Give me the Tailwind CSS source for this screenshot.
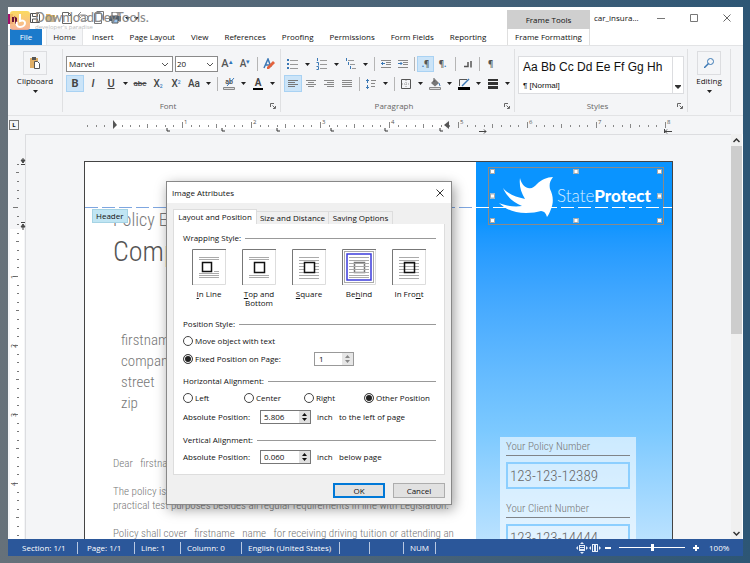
<!DOCTYPE html>
<html lang="en">
<head>
  <meta charset="UTF-8">
  <title>car_insurance - Image Attributes</title>
  <script src="https://cdn.jsdelivr.net/npm/@tailwindcss/browser@4"></script>
</head>
<body class="h-screen overflow-hidden bg-linear-to-r from-[#66717a] to-[#2d5675] py-[7px] pl-2 pr-[7px] font-['Open_Sans','Noto_Sans',sans-serif] text-[8px] font-medium leading-3 text-[#111]">

  <!-- shared symbols -->
  <svg class="hidden">
    <symbol id="caret" viewBox="0 0 5 3"><path d="M0 0h5L2.500 3z" fill="#222"/></symbol>
    <symbol id="chevron" viewBox="0 0 8 5"><path d="M1 1l3 3 3-3" fill="none" stroke="#555"/></symbol>
    <symbol id="launcher" viewBox="0 0 6 6"><path d="M.5 4V.5H4M2.500 2.500L5 5M5.500 3v2.500H3" fill="none" stroke="#666"/></symbol>
  </svg>

  <div class="flex h-full flex-col bg-[#f4f5f7]">

    <!-- title bar and tabs -->
    <header class="flex h-[38px] shrink-0 bg-white">
      <div class="relative flex min-w-0 flex-1 flex-col justify-between">
        <div class="flex h-[22px] items-center gap-1 pl-[21px]">
          <button aria-label="Save"><svg class="h-3 w-3" viewBox="0 0 12 12" fill="none" stroke="#555"><path d="M1.500 1.500h8l1 1v8h-9zM3.500 1.500v3h5v-3M3.500 10v-3h5v3"/></svg></button>
          <button aria-label="Open"><svg class="h-3 w-3" viewBox="0 0 12 12"><path d="M1 2h4l1 1h4v7H1z" fill="#e0b25c"/><path d="M3 5h9l-2 5H1z" fill="#c9b48c"/></svg></button>
          <button aria-label="New"><svg class="h-4 w-3" viewBox="0 0 12 16" fill="none" stroke="#666"><path d="M1.500 2.500h6l3 3v8h-9zM7.500 2.500v3h3"/></svg></button>
          <button aria-label="Undo"><svg class="h-3 w-3" viewBox="0 0 12 12" fill="none" stroke="#888"><path d="M1 3h7a3 3 0 010 6H5M4 0L1 3l3 3"/></svg></button>
          <button aria-label="Paste"><svg class="h-4 w-3" viewBox="0 0 12 16" fill="none" stroke="#777"><path d="M1.500 3.500h7v10h-7zM3.500 1.500h7v9"/></svg></button>
          <button aria-label="Print"><svg class="h-3 w-3" viewBox="0 0 12 12"><path d="M3 0h6v4H3z" fill="#fff" stroke="#555"/><path d="M0 4h12v5H0z" fill="#50606e"/><path d="M3 7h6v4H3z" fill="#9cc8ee" stroke="#555"/></svg></button>
          <button aria-label="More"><svg class="h-[3px] w-[5px]"><use href="#caret"/></svg></button>
          <button aria-label="Customize"><svg class="h-[3px] w-[5px]"><use href="#caret"/></svg></button>
        </div>
        <!-- watermark over the quick access icons -->
        <svg class="absolute left-0 top-1 h-5 w-6" viewBox="0 0 24 20">
          <defs><linearGradient id="wm" x2="0" y2="1"><stop stop-color="#fbd64e"/><stop offset="1" stop-color="#f5a98e"/></linearGradient></defs>
          <path d="M0 3h5v10H0z" fill="#a3116c"/>
          <rect x="2" y="0" width="20" height="19" rx="3" fill="url(#wm)" opacity=".9"/>
          <path d="M6 5l3 2v6H7V8M4 6h2v5H4z" fill="#6b1235"/>
          <path d="M12 3v7c3-1 5 0 5 2s-2 4-5 4-4-3-3-5" fill="none" stroke="#fff" stroke-width="2"/>
        </svg>
        <div class="pointer-events-none absolute left-[27px] top-1 whitespace-nowrap">
          <div class="font-['Lato',sans-serif] text-[13px] leading-3 text-[#8b8b8b]">DownloadDevTools.</div>
          <div class="text-[6px] leading-2 text-[#bbb]">developer's paradise</div>
        </div>
        <nav class="flex h-4 items-stretch">
          <button class="ml-0.5 w-8 bg-[#1b7acb] text-white">File</button>
          <button class="ml-1 w-[37px] border-x border-[#e3e4e6] bg-[#f4f5f7]">Home</button>
          <button class="ml-px px-2">Insert</button>
          <button class="px-2">Page Layout</button>
          <button class="px-2">View</button>
          <button class="px-2">References</button>
          <button class="px-2">Proofing</button>
          <button class="px-2">Permissions</button>
          <button class="px-2">Form Fields</button>
          <button class="px-2">Reporting</button>
        </nav>
      </div>
      <div class="flex w-[83px] flex-col pt-[3px]">
        <div class="flex h-[19px] items-center justify-center bg-[#cfcfcf]">Frame Tools</div>
        <button class="flex-1 border-x border-[#dfdfdf]">Frame Formatting</button>
      </div>
      <div class="flex h-[22px] w-[153px] items-center pl-1">
        <span class="flex-1">car_insura...</span>
        <button aria-label="Minimize" class="flex w-[33px] justify-center"><svg class="h-2 w-2" viewBox="0 0 8 8" stroke="#777"><path d="M0 4.500h8"/></svg></button>
        <button aria-label="Maximize" class="flex w-[33px] justify-center"><svg class="h-2 w-2" viewBox="0 0 8 8" fill="none" stroke="#777"><path d="M.5.5h7v7h-7z"/></svg></button>
        <button aria-label="Close" class="flex w-[33px] justify-center"><svg class="h-2 w-2" viewBox="0 0 8 8" stroke="#666"><path d="M.5.5l7 7M7.500.5l-7 7"/></svg></button>
      </div>
    </header>

    <!-- ribbon -->
    <section class="flex h-[71px] shrink-0 border-y border-[#e2e3e5] bg-[#f4f5f7] py-[3px]">
      <button class="flex w-[55px] flex-col items-center border-r border-[#dfe0e2] pt-0.5">
        <span class="flex h-6 w-6 items-center justify-center border border-[#dcdde0]">
          <svg class="h-3 w-3" viewBox="0 0 12 12"><path d="M1 1h8v10H1z" fill="#dfae66"/><path d="M3 0h4v3H3z" fill="#555"/><path d="M5.500 4.500h3l2 2v5h-5z" fill="#fff" stroke="#555"/></svg>
        </span>
        <span>Clipboard</span>
        <svg class="mt-[3px] h-[3px] w-[5px]"><use href="#caret"/></svg>
      </button>

      <div class="flex w-[218px] flex-col border-r border-[#dfe0e2] pl-[3px] pt-[7px]">
        <div class="flex h-4 items-center">
          <div class="relative h-4 w-[107px]">
            <select aria-label="Font name" class="h-4 w-full appearance-none border border-[#8a8a8a] bg-white pl-0.5"><option>Marvel</option></select>
            <svg class="pointer-events-none absolute right-1 top-[6px] h-[5px] w-2"><use href="#chevron"/></svg>
          </div>
          <div class="relative ml-0.5 h-4 w-[43px]">
            <select aria-label="Font size" class="h-4 w-full appearance-none border border-[#8a8a8a] bg-white pl-px"><option>20</option></select>
            <svg class="pointer-events-none absolute right-1 top-[6px] h-[5px] w-2"><use href="#chevron"/></svg>
          </div>
          <button class="w-[18px] font-['Roboto',sans-serif] text-[11px] text-[#555]">A<sup class="text-[7px] text-[#2f74b8]">▴</sup></button>
          <button class="w-[18px] font-['Roboto',sans-serif] text-[10px] text-[#555]">A<sup class="text-[7px] text-[#2f74b8]">▾</sup></button>
          <span class="flex w-[6px] justify-center"><i class="h-3.5 w-px bg-[#b5b5b5]"></i></span>
          <button aria-label="Clear formatting" class="flex w-[18px] justify-center"><svg class="h-3 w-3" viewBox="0 0 12 12"><path d="M1 10l4-9 3 8M2.500 7h4" fill="none" stroke="#3b78b5" stroke-width="1.500"/><path d="M4 9l6-6 2 2-6 6H4z" fill="#e2623d"/></svg></button>
        </div>
        <div class="mt-[3px] flex h-[17px] items-stretch font-['Roboto',sans-serif] text-[9px] text-[#444]">
          <button class="w-[18px] border border-[#a9d2f3] bg-[#cbe4f8] text-[11px] font-bold">B</button>
          <button class="w-[18px] text-[11px] italic">I</button>
          <button class="w-[18px] text-[11px] underline">U</button>
          <button aria-label="Underline styles" class="flex w-[11px] items-center justify-center"><svg class="h-[3px] w-[5px]"><use href="#caret"/></svg></button>
          <button class="w-[18px] text-[8px] line-through">abc</button>
          <button class="w-[18px] text-[10px]">X<sub class="text-[5px] text-[#2f74b8]">2</sub></button>
          <button class="w-[18px] text-[10px]">X<sup class="text-[5px] text-[#2f74b8]">2</sup></button>
          <button class="w-[18px] text-[10px]">Aa</button>
          <button aria-label="Change case" class="flex w-[11px] items-center justify-center"><svg class="h-[3px] w-[5px]"><use href="#caret"/></svg></button>
          <span class="flex w-[6px] items-center justify-center"><i class="h-3.5 w-px bg-[#b5b5b5]"></i></span>
          <button aria-label="Highlight" class="flex w-[18px] flex-col items-center justify-center text-[7px] leading-2">
            <span>ab</span><svg class="-mt-2 h-3 w-3" viewBox="0 0 12 12"><path d="M11 0L4 8" stroke="#3b78b5"/><path d="M.5 9.500h11v2H.5z" fill="#ddd" stroke="#888"/></svg>
          </button>
          <button aria-label="Highlight colors" class="flex w-[11px] items-center justify-center"><svg class="h-[3px] w-[5px]"><use href="#caret"/></svg></button>
          <button class="flex w-[18px] items-center justify-center"><span class="border-b-2 border-black px-0.5 text-[10px] font-bold leading-[10px]">A</span></button>
          <button aria-label="Font colors" class="flex w-[11px] items-center justify-center"><svg class="h-[3px] w-[5px]"><use href="#caret"/></svg></button>
        </div>
        <div class="mt-auto flex items-center text-[#666]">
          <span class="flex-1 text-center">Font</span>
          <button aria-label="Font dialog" class="mr-1"><svg class="h-[6px] w-[6px]"><use href="#launcher"/></svg></button>
        </div>
      </div>

      <div class="flex w-[234px] flex-col border-r border-[#dfe0e2] pl-[3px] pt-[7px]">
        <div class="flex h-4 items-stretch text-[#555]">
          <button aria-label="Bullets" class="flex w-[17px] items-center justify-center"><svg class="h-3 w-3" viewBox="0 0 12 12"><path d="M0 1h2v2H0zM0 5h2v2H0zM0 9h2v2H0z" fill="#3b78b5"/><path d="M3 2.500h8M3 6.500h8M3 10.500h8" stroke="#999"/></svg></button>
          <button aria-label="Bullet styles" class="flex w-3 items-center justify-center"><svg class="h-[3px] w-[5px]"><use href="#caret"/></svg></button>
          <button aria-label="Numbering" class="flex w-[17px] items-center justify-center"><svg class="h-3 w-3" viewBox="0 0 12 12"><path d="M1.500 0v3M.5 4.500h2v3M.5 8.500h2v3h-2" stroke="#3b78b5" fill="none"/><path d="M4 2.500h7M4 6.500h7M4 10.500h7" stroke="#999"/></svg></button>
          <button aria-label="Numbering styles" class="flex w-3 items-center justify-center"><svg class="h-[3px] w-[5px]"><use href="#caret"/></svg></button>
          <button aria-label="Multilevel list" class="flex w-[17px] items-center justify-center"><svg class="h-3 w-3" viewBox="0 0 12 12"><path d="M1.500 0v3M3.500 4v3M5.500 8v3" stroke="#3b78b5"/><path d="M3 2.500h6M5 6.500h5M7 10.500h4" stroke="#999"/></svg></button>
          <button aria-label="Multilevel styles" class="flex w-3 items-center justify-center"><svg class="h-[3px] w-[5px]"><use href="#caret"/></svg></button>
          <span class="flex w-[6px] items-center justify-center"><i class="h-3.5 w-px bg-[#b5b5b5]"></i></span>
          <button aria-label="Decrease indent" class="flex w-[17px] items-center justify-center"><svg class="h-2.5 w-2.5" viewBox="0 0 10 10"><path d="M0 1.500h10M5 3.500h5M5 5.500h5M0 8.500h10" stroke="#888"/><path d="M0 4.500h4M2 3L.5 4.500 2 6" fill="none" stroke="#3b78b5"/></svg></button>
          <button aria-label="Increase indent" class="flex w-[17px] items-center justify-center"><svg class="h-2.5 w-2.5" viewBox="0 0 10 10"><path d="M0 1.500h10M5 3.500h5M5 5.500h5M0 8.500h10" stroke="#888"/><path d="M0 4.500h4M2.500 3L4 4.500 2.500 6" fill="none" stroke="#3b78b5"/></svg></button>
          <span class="flex w-[6px] items-center justify-center"><i class="h-3.5 w-px bg-[#b5b5b5]"></i></span>
          <button class="w-[17px] border border-[#a9d2f3] bg-[#cbe4f8] font-bold"><span class="text-[#2f74b8]">.</span>¶</button>
          <button class="w-[17px] font-bold">¶<span class="text-[#2f74b8]">.</span></button>
          <span class="flex w-[8px] items-center justify-center"><i class="h-3.5 w-px bg-[#b5b5b5]"></i></span>
          <button aria-label="Line break marks" class="flex w-[17px] items-center justify-center"><svg class="h-2 w-2" viewBox="0 0 8 8" fill="none" stroke="#555" stroke-width="1.500"><path d="M0 6.500h4V2M7 1v6.500"/></svg></button>
          <span class="flex w-[6px] items-center justify-center"><i class="h-3.5 w-px bg-[#b5b5b5]"></i></span>
          <button class="w-[17px] font-bold">¶</button>
        </div>
        <div class="mt-[3px] flex h-[17px] items-stretch">
          <button aria-label="Align left" class="flex w-[18px] items-center justify-center border border-[#a9d2f3] bg-[#cbe4f8]"><svg class="h-2.5 w-2.5" viewBox="0 0 10 10" stroke="#777"><path d="M0 1.500h10M0 3.500h7M0 5.500h10M0 7.500h7"/></svg></button>
          <button aria-label="Center" class="flex w-[18px] items-center justify-center"><svg class="h-2.5 w-2.5" viewBox="0 0 10 10" stroke="#888"><path d="M0 1.500h10M2 3.500h6M0 5.500h10M2 7.500h6"/></svg></button>
          <button aria-label="Align right" class="flex w-[18px] items-center justify-center"><svg class="h-2.5 w-2.5" viewBox="0 0 10 10" stroke="#888"><path d="M0 1.500h10M3 3.500h7M0 5.500h10M3 7.500h7"/></svg></button>
          <button aria-label="Justify" class="flex w-[18px] items-center justify-center"><svg class="h-2.5 w-2.5" viewBox="0 0 10 10" stroke="#888"><path d="M0 1.500h10M0 3.500h10M0 5.500h10M0 7.500h10"/></svg></button>
          <span class="flex w-[6px] items-center justify-center"><i class="h-3.5 w-px bg-[#b5b5b5]"></i></span>
          <button aria-label="Line spacing" class="flex w-[18px] items-center justify-center"><svg class="h-2.5 w-2.5" viewBox="0 0 10 10"><path d="M1.500 0v4M1.500 6v4M0 1.500h3M0 8.500h3" stroke="#3b78b5"/><path d="M5 1.500h5M5 4.500h4M5 7.500h4" stroke="#888"/></svg></button>
          <button aria-label="Line spacing options" class="flex w-[11px] items-center justify-center"><svg class="h-[3px] w-[5px]"><use href="#caret"/></svg></button>
          <span class="flex w-[6px] items-center justify-center"><i class="h-3.5 w-px bg-[#b5b5b5]"></i></span>
          <button aria-label="Borders" class="flex w-[18px] items-center justify-center"><svg class="h-2.5 w-2.5" viewBox="0 0 10 10" fill="none"><path d="M.5.5h9v9h-9z" stroke="#555"/><path d="M5 1v8M1 5h8" stroke="#999" stroke-dasharray="1 1"/></svg></button>
          <button aria-label="Border options" class="flex w-[11px] items-center justify-center"><svg class="h-[3px] w-[5px]"><use href="#caret"/></svg></button>
          <button aria-label="Shading" class="flex w-[18px] items-center justify-center"><svg class="h-3 w-3" viewBox="0 0 12 12"><path d="M2 5l4-4 4 4-4 3.500z" fill="#777"/><path d="M5 0v4" stroke="#555"/><path d="M10 5l1 3" stroke="#3b78b5"/><path d="M.5 9.500h11v2H.5z" fill="#ddd" stroke="#888"/></svg></button>
          <button aria-label="Shading colors" class="flex w-[11px] items-center justify-center"><svg class="h-[3px] w-[5px]"><use href="#caret"/></svg></button>
          <button aria-label="Line color" class="flex w-[18px] items-center justify-center"><svg class="h-3 w-3" viewBox="0 0 12 12"><path d="M1.500 8V1.500H9" fill="none" stroke="#555"/><path d="M11 1L4 8" stroke="#3b78b5" stroke-width="1.500"/><path d="M0 9h12v3H0z" fill="#000"/></svg></button>
          <button aria-label="Line colors" class="flex w-[11px] items-center justify-center"><svg class="h-[3px] w-[5px]"><use href="#caret"/></svg></button>
          <button aria-label="Line width" class="flex w-[18px] items-center justify-center"><svg class="h-2.5 w-2.5" viewBox="0 0 10 10" fill="#333"><path d="M0 0h10v2H0zM0 3h10v3H0zM0 7h10v3H0z"/></svg></button>
          <button aria-label="Line widths" class="flex w-[11px] items-center justify-center"><svg class="h-[3px] w-[5px]"><use href="#caret"/></svg></button>
        </div>
        <div class="mt-auto flex items-center text-[#666]">
          <span class="flex-1 text-center">Paragraph</span>
          <button aria-label="Paragraph dialog" class="mr-1"><svg class="h-[6px] w-[6px]"><use href="#launcher"/></svg></button>
        </div>
      </div>

      <div class="flex w-[173px] flex-col border-r border-[#dfe0e2] pl-[3px] pt-[7px]">
        <div class="flex h-[38px] w-[166px] border border-[#dcdde0] bg-white">
          <div class="flex-1 whitespace-nowrap pl-1 pt-[3px]">
            <div class="font-['Liberation_Sans',sans-serif] text-[12px] leading-[14px]">Aa Bb Cc Dd Ee Ff Gg Hh</div>
            <div class="mt-[6px] font-['Liberation_Sans',sans-serif]">¶ [Normal]</div>
          </div>
          <button aria-label="More styles" class="flex w-[11px] items-end justify-center border-l border-[#dcdde0] pb-1"><svg class="h-1 w-[6px]" viewBox="0 0 6 4" fill="#333"><path d="M0 0h6v1L3 4 0 1z"/></svg></button>
        </div>
        <div class="mt-auto flex items-center text-[#666]">
          <span class="flex-1 text-center">Styles</span>
          <button aria-label="Styles dialog" class="mr-1"><svg class="h-[6px] w-[6px]"><use href="#launcher"/></svg></button>
        </div>
      </div>

      <button class="flex w-[43px] flex-col items-center border-r border-[#dfe0e2] pt-0.5">
        <span class="flex h-6 w-6 items-center justify-center border border-[#dcdde0]">
          <svg class="h-2.5 w-2.5" viewBox="0 0 10 10" fill="none" stroke="#3b78b5"><circle cx="6.500" cy="3.500" r="3"/><path d="M4.500 5.500L0 10" stroke-width="1.500"/></svg>
        </span>
        <span>Editing</span>
        <svg class="mt-[3px] h-[3px] w-[5px]"><use href="#caret"/></svg>
      </button>
    </section>

    <!-- horizontal ruler -->
    <div class="flex h-[18px] shrink-0 items-center">
      <button class="ml-px h-2.5 w-2.5 border border-[#777] text-[6px] font-bold leading-2">L</button>
      <svg class="ml-[66px] h-[18px] w-[600px]" viewBox="0 0 600 18" font-family="Open Sans, sans-serif" font-size="6" fill="#555">
        <defs>
          <pattern id="hticks" width="69" height="18" x="28" patternUnits="userSpaceOnUse">
            <path d="M0 6h1v6h-1zM9 9h1v2h-1zM17 9h1v2h-1zM26 9h1v2h-1zM34 8h1v4h-1zM43 9h1v2h-1zM52 9h1v2h-1zM60 9h1v2h-1z" fill="#888"/>
          </pattern>
        </defs>
        <path d="M29 4h332v9H29z" fill="#fff"/>
        <path d="M0 0h583v18H0z" fill="url(#hticks)"/>
        <path d="M28 4v9l4-4z"/>
        <text x="99" y="8">1</text><text x="168" y="8">2</text><text x="237" y="8">3</text><text x="306" y="8">4</text>
        <text x="375" y="8">5</text><text x="444" y="8">6</text><text x="513" y="8">7</text><text x="582" y="8">8</text>
        <path d="M82 12v3h3M137 12v3h3M192 12v3h3M246 12v3h3M300 12v3h3M355 12v3h3" fill="none" stroke="#333"/>
        <path d="M364 5v8l-5-4z"/>
        <path d="M394 15.500h7M399 13.500l2 2-2 2M580 15.500h7M582 13.500l-2 2 2 2M579.500 13v4" fill="none" stroke="#444"/>
      </svg>
    </div>

    <!-- work area -->
    <main class="relative flex min-h-0 flex-1 overflow-hidden">
      <svg class="h-full w-[18px] shrink-0" viewBox="0 0 18 405" preserveAspectRatio="xMidYMin slice" font-family="Open Sans, sans-serif" font-size="7" fill="#555">
        <defs>
          <pattern id="vticks" width="18" height="69" y="73" patternUnits="userSpaceOnUse">
            <path d="M5 0h5v1H5zM9 9h2v1H9zM9 17h2v1H9zM9 26h2v1H9zM8 34h3v1H8zM9 43h2v1H9zM9 52h2v1H9zM9 60h2v1H9z" fill="#777"/>
          </pattern>
        </defs>
        <path d="M2 95h14v310H2z" fill="#fff"/>
        <path d="M2 27h14v378H2z" fill="url(#vticks)"/>
        <path d="M17.500 0v405" stroke="#dcdde0"/>
        <path d="M15 24v4M13 26h4l-2 3zM13 30.500h4M15 96v-4M13 93h4l-2-3zM13 88.500h4" stroke="#444"/>
        <text transform="rotate(-90 8 145)" x="8" y="145">1</text>
        <text transform="rotate(-90 8 214)" x="8" y="214">2</text>
        <text transform="rotate(-90 8 283)" x="8" y="283">3</text>
        <text transform="rotate(-90 8 352)" x="8" y="352">4</text>
      </svg>

      <div class="min-w-0 flex-1 overflow-hidden border-t border-[#dcdde0] pl-[58px] pr-[58px] pt-[26px]">
        <!-- page -->
        <article class="relative flex h-[600px] border border-[#444] bg-white font-['Liberation_Sans_Narrow','Roboto_Condensed','Liberation_Sans',sans-serif] text-[11px] font-light leading-[14px] text-[#777]">
          <div class="min-w-0 flex-1 overflow-hidden whitespace-nowrap pl-7 pt-[46px]">
            <div class="text-[18px] leading-6">Policy Endorsement</div>
            <div class="mt-1 text-[28px] leading-8 text-[#555]">Company Car</div>
            <div class="mt-[62px] pl-2 text-[15px] leading-[21px]">firstname<br>company<br>street<br>zip</div>
            <p class="mt-[43px]">Dear &nbsp; firstname</p>
            <p class="mt-3.5">The policy is based on the theoretical and<br>practical test purposes besides all regular requirements in line with Legislation.</p>
            <p class="mt-3.5">Policy shall cover &nbsp; firstname &nbsp; name &nbsp; for receiving driving tuition or attending an</p>
          </div>
          <aside class="w-[196px] shrink-0 bg-linear-to-b from-[#0a94ff] from-10% via-[#7cc9ff] via-45% to-[#dff1ff] to-75% pl-3 pr-2">
            <!-- selected logo frame -->
            <div class="relative mt-[5px] flex h-[58px] items-center border border-[#8a8a8a] pl-[10px]">
              <svg class="h-11 w-[55px] shrink-0" viewBox="0 0 55 44" fill="#fff"><path d="M54 3C48 3 42 6 38 10c-3 3-5 5-9 4-4-1-7-5-8-10-1 8 1 14 5 21C17 23 9 20 4 14c4 9 10 14 19 18-8 1-16 0-23-3 6 6 15 10 27 10 6 0 11-1 15-2 3 0 5 2 6 6 2-3 3-5 4-8 3-7 2-14-1-20-1-5 0-8 3-12z"/></svg>
              <div class="ml-[3px] font-['Lato',sans-serif] text-[17px] font-light leading-5 text-[#d9efff]">State<span class="font-black text-white">Protect</span></div>
              <i class="absolute left-px top-px h-[5px] w-[5px] border border-[#aaa] bg-white"></i>
              <i class="absolute left-1/2 top-px h-[5px] w-[5px] -translate-x-1/2 border border-[#aaa] bg-white"></i>
              <i class="absolute right-px top-px h-[5px] w-[5px] border border-[#aaa] bg-white"></i>
              <i class="absolute left-px top-1/2 h-[5px] w-[5px] -translate-y-1/2 border border-[#aaa] bg-white"></i>
              <i class="absolute right-px top-1/2 h-[5px] w-[5px] -translate-y-1/2 border border-[#aaa] bg-white"></i>
              <i class="absolute bottom-px left-px h-[5px] w-[5px] border border-[#aaa] bg-white"></i>
              <i class="absolute bottom-px left-1/2 h-[5px] w-[5px] -translate-x-1/2 border border-[#aaa] bg-white"></i>
              <i class="absolute bottom-px right-px h-[5px] w-[5px] border border-[#aaa] bg-white"></i>
            </div>
            <div class="ml-3 mr-7 mt-[212px] h-48 bg-white/60 px-[6px] pt-[3px]">
              <label for="policy" class="block h-4 border-b border-[#808488]">Your Policy Number</label>
              <input id="policy" value="123-123-12389" class="mt-1.5 h-[27px] w-full border-2 border-[#8ccfff] px-0.5 text-[15px] text-[#666]">
              <label for="client" class="mt-[13px] block h-4 border-b border-[#808488]">Your Client Number</label>
              <input id="client" value="123-123-14444" class="mt-1.5 h-[27px] w-full border-2 border-[#8ccfff] px-0.5 text-[15px] text-[#666]">
            </div>
          </aside>
          <!-- header boundary -->
          <div class="absolute inset-x-0 top-[45px] flex">
            <svg class="h-px flex-1" stroke="#7ea6e0" stroke-width="2" stroke-dasharray="13 4"><path d="M0 0h2000"/></svg>
            <svg class="h-px w-[196px]" stroke="#fff" stroke-width="2" stroke-dasharray="13 4"><path d="M0 0h196"/></svg>
          </div>
          <div class="absolute left-[7px] top-[47px] border border-[#a5d3e4] bg-[#c0e5f3] px-[3px] font-['Open_Sans','Noto_Sans',sans-serif] text-[8px] font-medium leading-3 text-[#111]">Header</div>
        </article>
      </div>

      <!-- scrollbar -->
      <div class="flex w-3 shrink-0 flex-col items-center border-r border-white bg-[#f0f0f0]">
        <button aria-label="Scroll up" class="flex h-3 items-center"><svg class="h-[5px] w-[7px]" viewBox="0 0 7 5" fill="none" stroke="#333" stroke-width="1.500"><path d="M.5 4l3-3 3 3"/></svg></button>
        <div class="h-[188px] w-full bg-[#cdcdcd]"></div>
        <button aria-label="Scroll down" class="mt-auto flex h-3 items-center"><svg class="h-[5px] w-[7px]" viewBox="0 0 7 5" fill="none" stroke="#333" stroke-width="1.500"><path d="M.5 1l3 3 3-3"/></svg></button>
      </div>

      <!-- image attributes dialog -->
      <div role="dialog" aria-labelledby="dlgTitle" class="absolute left-[158px] top-[47px] w-[286px] border border-[#888] bg-[#f0f0f0] pb-[6px] shadow-[2px_4px_12px_rgba(0,0,0,.4)]">
        <div class="flex h-[21px] items-center justify-between bg-white pl-[5px] pr-[7px]">
          <h1 id="dlgTitle">Image Attributes</h1>
          <button aria-label="Close dialog"><svg class="h-2 w-2" viewBox="0 0 8 8" stroke="#333"><path d="M.5.5l7 7M7.500.5l-7 7"/></svg></button>
        </div>
        <div class="px-[6px] pt-[6px]">
          <div class="flex items-end">
            <button class="h-[15px] w-[84px] border-x border-t border-[#ddd] bg-white">Layout and Position</button>
            <button class="h-[13px] w-[72px] border-r border-t border-[#ddd]">Size and Distance</button>
            <button class="h-[13px] w-16 border-r border-t border-[#ddd]">Saving Options</button>
          </div>
          <form class="h-[251px] border-x border-b border-[#ddd] bg-white pl-[9px] pr-2 pt-2">
            <div class="flex h-3 items-center gap-1">Wrapping Style:<i class="h-px flex-1 bg-[#999]"></i></div>
            <div class="mt-[5px] flex h-[58px] items-start gap-4 pl-[9px] text-center leading-[9px]">
              <button type="button" class="w-[34px]">
                <svg class="h-9 w-[34px]" viewBox="0 0 34 36" fill="none"><path d="M33.500 0v35.500H0" stroke="#ddd"/><path d="M.5 36V.5H34" stroke="#777"/><path d="M7 8.500h20M7 10.500h20M22 22.500h5M7 24.500h20M7 26.500h20M7 28.500h20" stroke="#aaa"/><path d="M10.500 13.500h9v9h-9z" stroke="#111" stroke-width="1.500"/></svg>
                <span class="mt-1 block"><u>I</u>n Line</span>
              </button>
              <button type="button" class="w-[34px]">
                <svg class="h-9 w-[34px]" viewBox="0 0 34 36" fill="none"><path d="M33.500 0v35.500H0" stroke="#ddd"/><path d="M.5 36V.5H34" stroke="#777"/><path d="M7 8.500h20M7 10.500h20M7 26.500h20M7 28.500h20" stroke="#aaa"/><path d="M12.500 13.500h10v10h-10z" stroke="#111" stroke-width="1.500"/></svg>
                <span class="mt-1 block"><u>T</u>op and Bottom</span>
              </button>
              <button type="button" class="w-[34px]">
                <svg class="h-9 w-[34px]" viewBox="0 0 34 36" fill="none"><path d="M33.500 0v35.500H0" stroke="#ddd"/><path d="M.5 36V.5H34" stroke="#777"/><path d="M7 8.500h20M7 11.500h20M7 14.500h20M7 17.500h20M7 20.500h20M7 23.500h20M7 26.500h20M7 29.500h20" stroke="#aaa"/><path d="M12.500 13.500h10v10h-10z" fill="#fff" stroke="#111" stroke-width="1.500"/></svg>
                <span class="mt-1 block"><u>S</u>quare</span>
              </button>
              <button type="button" class="w-[34px]">
                <svg class="h-9 w-[34px]" viewBox="0 0 34 36" fill="none"><path d="M33.500 0v35.500H0" stroke="#ddd"/><path d="M.5 36V.5H34" stroke="#777"/><path d="M2.500 2.500h29v31h-29z" stroke="#555" stroke-dasharray="1 1"/><path d="M5 5h24v26H5z" fill="#fff" stroke="#3c3cdc" stroke-width="1.500"/><path d="M12.500 13.500h10v10h-10z" stroke="#777" stroke-width="1.500"/><path d="M7 8.500h20M7 11.500h20M7 14.500h20M7 17.500h20M7 20.500h20M7 23.500h20M7 26.500h20M7 28.500h20" stroke="#aaa"/></svg>
                <span class="mt-1 block">Be<u>h</u>ind</span>
              </button>
              <button type="button" class="w-[34px]">
                <svg class="h-9 w-[34px]" viewBox="0 0 34 36" fill="none"><path d="M33.500 0v35.500H0" stroke="#ddd"/><path d="M.5 36V.5H34" stroke="#777"/><path d="M7 8.500h20M7 11.500h20M7 14.500h20M7 17.500h20M7 20.500h20M7 23.500h20M7 26.500h20M7 29.500h20" stroke="#aaa"/><path d="M12.500 13.500h10v10h-10z" stroke="#111" stroke-width="1.500"/></svg>
                <span class="mt-1 block whitespace-nowrap">In Fro<u>n</u>t</span>
              </button>
            </div>

            <div class="mt-[11px] flex h-3 items-center gap-1">Position Style:<i class="h-px flex-1 bg-[#999]"></i></div>
            <label class="mt-[3px] flex h-4 items-center gap-0.5"><input type="radio" name="pos" class="h-2.5 w-2.5 appearance-none rounded-full border border-[#444] checked:bg-[#222] checked:shadow-[inset_0_0_0_1px_#fff]">Move object with text</label>
            <div class="mt-0.5 flex h-4 items-center">
              <label class="flex w-[131px] items-center gap-0.5"><input type="radio" name="pos" checked class="h-2.5 w-2.5 appearance-none rounded-full border border-[#444] checked:bg-[#222] checked:shadow-[inset_0_0_0_1px_#fff]">Fixed Position on Page:</label>
              <div class="flex h-3.5 w-10 border border-[#999]">
                <input aria-label="Page" value="1" class="min-w-0 flex-1 pl-1">
                <button type="button" aria-label="Change page" class="flex w-[11px] items-center justify-center bg-[#e6e6e6]"><svg class="h-2 w-[5px]" viewBox="0 0 5 8" fill="#888"><path d="M0 3l2.500-3L5 3zM0 5h5L2.500 8z"/></svg></button>
              </div>
            </div>

            <div class="mt-2 flex h-3 items-center gap-1">Horizontal Alignment:<i class="h-px flex-1 bg-[#999]"></i></div>
            <div class="mt-[3px] flex h-4 items-center whitespace-nowrap">
              <label class="flex w-[61px] items-center gap-0.5"><input type="radio" name="hor" class="h-2.5 w-2.5 appearance-none rounded-full border border-[#444] checked:bg-[#222] checked:shadow-[inset_0_0_0_1px_#fff]">Left</label>
              <label class="flex w-[60px] items-center gap-0.5"><input type="radio" name="hor" class="h-2.5 w-2.5 appearance-none rounded-full border border-[#444] checked:bg-[#222] checked:shadow-[inset_0_0_0_1px_#fff]">Center</label>
              <label class="flex w-[60px] items-center gap-0.5"><input type="radio" name="hor" class="h-2.5 w-2.5 appearance-none rounded-full border border-[#444] checked:bg-[#222] checked:shadow-[inset_0_0_0_1px_#fff]">Right</label>
              <label class="flex items-center gap-0.5"><input type="radio" name="hor" checked class="h-2.5 w-2.5 appearance-none rounded-full border border-[#444] checked:bg-[#222] checked:shadow-[inset_0_0_0_1px_#fff]">Other Position</label>
            </div>
            <div class="mt-[3px] flex h-4 items-center">
              <label for="absx" class="w-[77px]">Absolute Position:</label>
              <div class="flex h-3.5 w-[51px] border border-[#777]">
                <input id="absx" value="5.806" class="min-w-0 flex-1 pl-[3px]">
                <button type="button" aria-label="Change horizontal position" class="flex w-[11px] items-center justify-center bg-[#e0e0e0]"><svg class="h-2 w-[5px]" viewBox="0 0 5 8" fill="#111"><path d="M0 3l2.500-3L5 3zM0 5h5L2.500 8z"/></svg></button>
              </div>
              <span class="ml-[6px] w-[22px]">inch</span><span>to the left of page</span>
            </div>

            <div class="mt-[9px] flex h-3 items-center gap-1">Vertical Alignment:<i class="h-px flex-1 bg-[#999]"></i></div>
            <div class="mt-[3px] flex h-4 items-center">
              <label for="absy" class="w-[77px]">Absolute Position:</label>
              <div class="flex h-3.5 w-[51px] border border-[#777]">
                <input id="absy" value="0.060" class="min-w-0 flex-1 pl-[3px]">
                <button type="button" aria-label="Change vertical position" class="flex w-[11px] items-center justify-center bg-[#e0e0e0]"><svg class="h-2 w-[5px]" viewBox="0 0 5 8" fill="#111"><path d="M0 3l2.500-3L5 3zM0 5h5L2.500 8z"/></svg></button>
              </div>
              <span class="ml-[6px] w-[22px]">inch</span><span>below page</span>
            </div>
          </form>
          <div class="mt-2 flex justify-end gap-2">
            <button class="h-[15px] w-[52px] border-2 border-[#0078d7] bg-[#e1e1e1] leading-[10px]">OK</button>
            <button class="h-[15px] w-[52px] border border-[#adadad] bg-[#e1e1e1]">Cancel</button>
          </div>
        </div>
      </div>
    </main>

    <!-- status bar -->
    <footer class="flex h-[17px] shrink-0 items-center bg-[#2b579a] text-white">
      <span class="w-[70px] border-r border-[#b8c8e2] pl-[14px]">Section: 1/1</span>
      <span class="w-[57px] border-r border-[#b8c8e2] pl-[9px]">Page: 1/1</span>
      <span class="w-[46px] border-r border-[#b8c8e2] pl-[6px]">Line: 1</span>
      <span class="w-[61px] border-r border-[#b8c8e2] pl-[6px]">Column: 0</span>
      <span class="w-[98px] border-r border-[#b8c8e2] pl-[6px]">English (United States)</span>
      <span class="h-3 w-[30px] border-r border-[#b8c8e2]"></span>
      <span class="h-3 w-[34px] border-r border-[#b8c8e2]"></span>
      <span class="w-[32px] border-r border-[#b8c8e2] pl-[6px]">NUM</span>
      <div class="ml-auto flex items-center">
        <button aria-label="Fit page"><svg class="h-3 w-3" viewBox="0 0 12 12" fill="#e4ecf8"><path d="M6 0l2 2H4zM6 12l2-2H4zM0 6l2-2v4zM12 6l-2-2v4zM3 3h6v6H3z"/><path d="M4 4.500h4M4 6.500h4" stroke="#2b579a"/></svg></button>
        <button aria-label="Fit width"><svg class="ml-px h-3 w-3" viewBox="0 0 12 12" fill="#e4ecf8"><path d="M0 6l2-2v4zM12 6l-2-2v4zM3 2h6v8H3z"/><path d="M4.500 3v6M7.500 3v6" stroke="#2b579a"/></svg></button>
        <button aria-label="Zoom out" class="ml-1 h-0.5 w-[6px] bg-white"></button>
        <input type="range" aria-label="Zoom" value="50" class="ml-2 h-2 w-[66px] appearance-none bg-[linear-gradient(#fff,#fff)] bg-[length:100%_1px] bg-center bg-no-repeat [&::-webkit-slider-thumb]:h-[7px] [&::-webkit-slider-thumb]:w-[3px] [&::-webkit-slider-thumb]:appearance-none [&::-webkit-slider-thumb]:bg-white">
        <button aria-label="Zoom in"><svg class="ml-2 h-[6px] w-[6px]" viewBox="0 0 6 6" stroke="#fff" stroke-width="2"><path d="M0 3h6M3 0v6"/></svg></button>
        <span class="ml-2.5 w-[34px]">100%</span>
      </div>
    </footer>
  </div>

</body>
</html>
